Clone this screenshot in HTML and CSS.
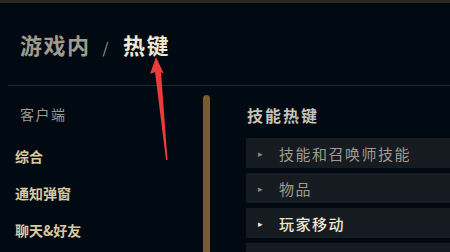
FILE: index.html
```html
<!DOCTYPE html>
<html lang="zh">
<head>
<meta charset="utf-8">
<link rel="stylesheet" href="styles.css">
</head>
<body>
<div class="topbar"></div>
<header class="header">
  <h1 class="title"><span class="crumb">游戏内</span><span class="sep">/</span><span class="current">热键</span></h1>
</header>
<div class="divider"></div>
<div class="main">
  <nav class="nav">
    <div class="nav-group">客户端</div>
    <div class="nav-item">综合</div>
    <div class="nav-item">通知弹窗</div>
    <div class="nav-item">聊天&amp;好友</div>
  </nav>
  <div class="scroll"></div>
  <section class="content">
    <h2 class="section-title">技能热键</h2>
    <div class="rows">
      <div class="row"><span class="tri">&#9656;</span><span class="label">技能和召唤师技能</span></div>
      <div class="row"><span class="tri">&#9656;</span><span class="label">物品</span></div>
      <div class="row active"><span class="tri">&#9656;</span><span class="label">玩家移动</span></div>
      <div class="row"><span class="tri">&#9656;</span><span class="label">镜头控制</span></div>
    </div>
  </section>
</div>
<svg class="arrow" width="450" height="252" viewBox="0 0 450 252">
  <polygon points="156,57 150,74 155,72 166,160 167.5,160 161,72 164,74" fill="#ee3a3a"/>
</svg>
</body>
</html>
```
FILE: styles.css
```css
html, body {
  margin: 0;
  padding: 0;
  background: #010a13;
  width: 450px;
  height: 252px;
  overflow: hidden;
  font-family: "Noto Sans CJK SC", "Noto Sans", sans-serif;
}
.topbar {
  height: 3px;
  background: #2a2922;
}
.header {
  padding: 30px 0 0 20px;
  box-sizing: border-box;
  height: 82px;
}
.title {
  margin: 0;
  font-size: 22px;
  line-height: 22px;
  font-weight: 700;
  letter-spacing: 1.5px;
  display: flex;
  align-items: baseline;
}
.crumb { color: #a09b8c; }
.sep {
  color: #a09b8c;
  font-weight: 400;
  font-size: 15px;
  margin: 0 13px 0 12px;
}
.current { color: #f0e6d2; }
.divider {
  height: 1px;
  margin-left: 8px;
  background: #1e282d;
}
.main {
  display: flex;
  height: 166px;
}
.nav {
  width: 203px;
  display: flex;
  flex-direction: column;
  padding-top: 21px;
  box-sizing: border-box;
}
.nav-group {
  padding-left: 20px;
  font-size: 14px;
  line-height: 14px;
  letter-spacing: 1.5px;
  color: #a09b8c;
  margin-bottom: 28px;
}
.nav-item {
  padding-left: 15px;
  font-size: 14px;
  line-height: 14px;
  font-weight: 700;
  color: #d8caa0;
  margin-bottom: 23px;
}
.scroll {
  width: 7px;
  margin-top: 9px;
  background: #7a5c2c;
  border-radius: 3.5px 3.5px 0 0;
}
.content {
  flex: 1;
  padding-left: 36px;
  padding-top: 21px;
  min-width: 0;
}
.section-title {
  margin: 0 0 15px 1px;
  font-size: 16px;
  line-height: 16px;
  font-weight: 700;
  letter-spacing: 2px;
  color: #c6c3b9;
}
.rows {
  display: flex;
  flex-direction: column;
  gap: 5px;
}
.row {
  height: 30px;
  background: #161b22;
  display: flex;
  align-items: center;
  padding-left: 12px;
  margin-right: -10px;
}
.tri {
  font-size: 9px;
  color: #8c8a82;
  width: 21px;
}
.label {
  font-size: 15px;
  letter-spacing: 1.5px;
  color: #a09b8c;
}
.row.active .tri { color: #f0e6d2; }
.row.active .label {
  color: #f0e6d2;
  font-weight: 500;
}
.arrow {
  position: absolute;
  left: 0;
  top: 0;
  pointer-events: none;
}
```
